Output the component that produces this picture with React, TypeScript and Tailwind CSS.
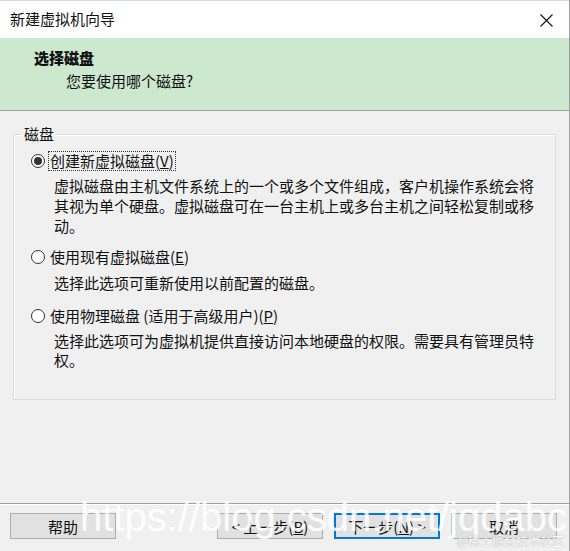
import type { ReactNode } from 'react'

const FONT = { fontFamily: '"Noto Sans CJK SC", "Noto Sans", sans-serif' }

function Radio({ checked, children, focus }: { checked?: boolean; children: ReactNode; focus?: boolean }) {
  return (
    <div className="flex items-center h-5">
      <span className="ml-[17px] w-[14px] h-[14px] rounded-full border border-[#333] bg-white flex items-center justify-center shrink-0">
        {checked && <span className="w-[8px] h-[8px] rounded-full bg-[#333]" />}
      </span>
      <span
        className={`ml-[4px] px-[1px] leading-[18px] text-[15px] text-[#111] ${
          focus ? 'outline outline-1 outline-dotted outline-[#333]' : ''
        }`}
      >
        {children}
      </span>
    </div>
  )
}

function Btn({ children, primary }: { children: ReactNode; primary?: boolean }) {
  return (
    <button
      className={`w-[106px] h-[26px] bg-[#e1e1e1] text-[15px] text-[#111] leading-none flex items-center justify-center ${
        primary ? 'border-2 border-[#0078d7]' : 'border border-[#adadad]'
      }`}
    >
      {children}
    </button>
  )
}

export default function App() {
  return (
    <div className="relative w-[570px] h-[551px] flex flex-col bg-[#f0f0f0] overflow-hidden border-r border-[#a0a0a0]" style={FONT}>
      {/* Title bar */}
      <div className="h-[38px] bg-white flex items-center justify-between pl-[10px] pr-[16px] border-t border-[#d8d8d8]">
        <span className="text-[15px] text-[#111]">新建虚拟机向导</span>
        <svg width="13" height="13" viewBox="0 0 13 13" className="mt-[1px]">
          <path d="M0.5 0.5 L12.5 12.5 M12.5 0.5 L0.5 12.5" stroke="#111" strokeWidth="1.1" />
        </svg>
      </div>

      {/* Header */}
      <div className="h-[73px] bg-[#cce8cf] border-b border-[#a0a0a0] pt-[9px]">
        <div className="pl-[34px] text-[15px] font-black text-[#111] leading-[22px]">选择磁盘</div>
        <div className="pl-[66px] text-[15px] text-[#111] leading-[22px] mt-[1px]">您要使用哪个磁盘?</div>
      </div>

      {/* Body */}
      <div className="flex-1 px-[13px] pt-[13px]">
        <fieldset className="border border-[#dcdcdc] shadow-[inset_1px_1px_0_#fff] h-[276px] px-0">
          <legend className="ml-[8px] px-[2px] text-[15px] text-[#111] leading-[20px]">磁盘</legend>
          <div className="pt-[7px]">
            <Radio checked focus>
              创建新虚拟磁盘(<span className="underline">V</span>)
            </Radio>
            <p className="mt-[5px] ml-[40px] text-[15px] leading-[20px] text-[#111]">
              虚拟磁盘由主机文件系统上的一个或多个文件组成，客户机操作系统会将
              <br />
              其视为单个硬盘。虚拟磁盘可在一台主机上或多台主机之间轻松复制或移
              <br />
              动。
            </p>
            <div className="mt-[11px]">
              <Radio>
                使用现有虚拟磁盘(<span className="underline">E</span>)
              </Radio>
            </div>
            <p className="mt-[6px] ml-[40px] text-[15px] leading-[20px] text-[#111]">选择此选项可重新使用以前配置的磁盘。</p>
            <div className="mt-[13px]">
              <Radio>
                使用物理磁盘 (适用于高级用户)(<span className="underline">P</span>)
              </Radio>
            </div>
            <p className="mt-[5px] ml-[40px] text-[15px] leading-[19px] text-[#111]">
              选择此选项可为虚拟机提供直接访问本地硬盘的权限。需要具有管理员特
              <br />
              权。
            </p>
          </div>
        </fieldset>
      </div>

      {/* Footer */}
      <div className="h-[48px] border-t border-[#a0a0a0] shadow-[inset_0_1px_0_#fff] flex items-start pt-[9px] pl-[10px] pr-[12px]">
        <Btn>帮助</Btn>
        <div className="ml-auto flex gap-[11px]">
          <Btn>
            &lt; 上一步(<span className="underline">B</span>)
          </Btn>
          <Btn primary>
            下一步(<span className="underline">N</span>) &gt;
          </Btn>
          <Btn>取消</Btn>
        </div>
      </div>

      {/* Watermarks */}
      <div
        className="absolute left-[80px] top-[495px] text-[40px] leading-[44px] text-white/85 whitespace-nowrap pointer-events-none"
        style={{ fontFamily: '"Liberation Sans", Arial, sans-serif' }}
      >
        https://blog.csdn.net/jqdabc
      </div>
      <div className="absolute right-[5px] bottom-[2px] text-[12px] leading-[16px] text-white [text-shadow:0_0_1px_#888] pointer-events-none">
        @稀土掘金技术社区
      </div>
    </div>
  )
}
